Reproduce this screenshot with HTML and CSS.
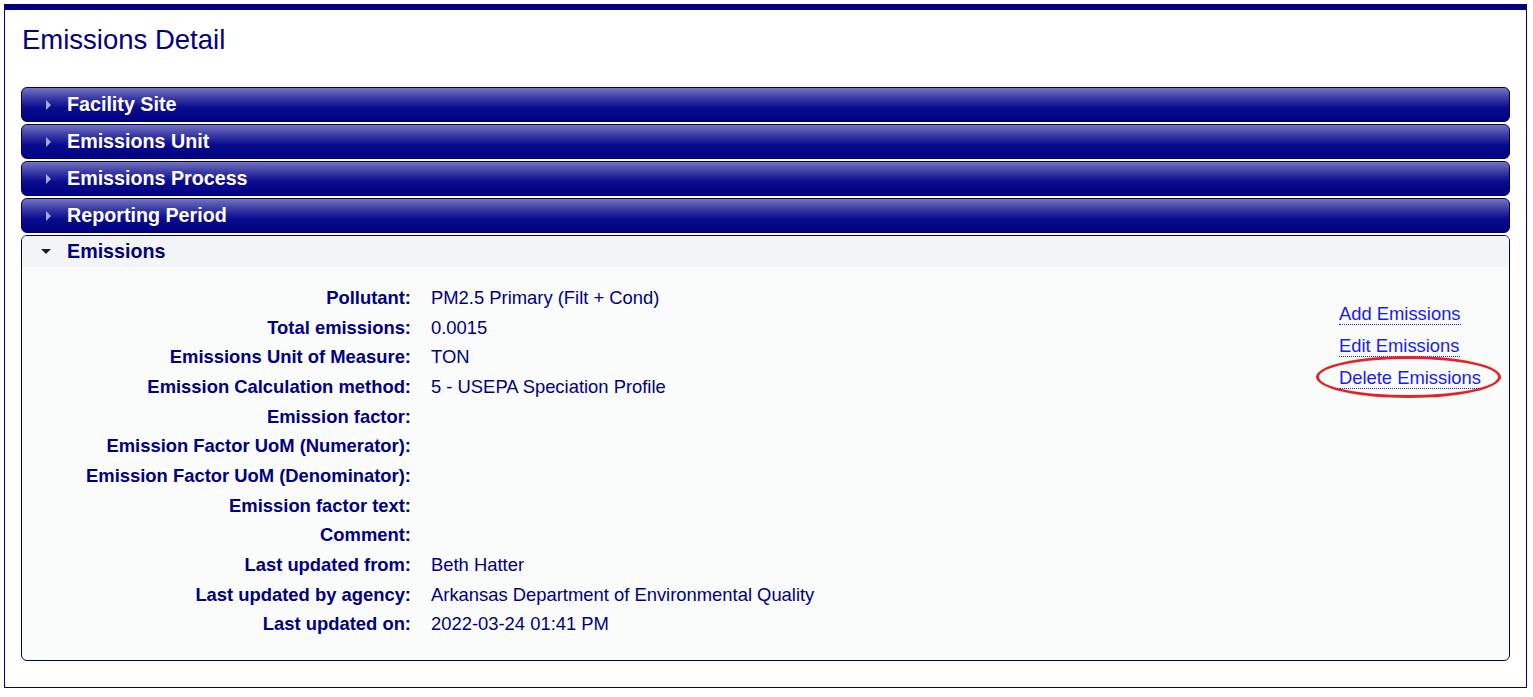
FILE: index.html
```html
<!DOCTYPE html>
<html>
<head>
    <title>Emissions Detail</title>
    <link rel="stylesheet" href="styles.css">
</head>
<body>
    <div class="page">
        <h1 class="page-title">Emissions Detail</h1>

        <div class="accordion">
            <div class="acc-header"><span class="arrow-right"></span>Facility Site</div>
            <div class="acc-header"><span class="arrow-right"></span>Emissions Unit</div>
            <div class="acc-header"><span class="arrow-right"></span>Emissions Process</div>
            <div class="acc-header"><span class="arrow-right"></span>Reporting Period</div>

            <div class="acc-panel">
                <div class="acc-header-open"><span class="arrow-down"></span>Emissions</div>
                <div class="acc-content">
                    <table class="details">
                        <tr><th>Pollutant:</th><td>PM2.5 Primary (Filt + Cond)</td></tr>
                        <tr><th>Total emissions:</th><td>0.0015</td></tr>
                        <tr><th>Emissions Unit of Measure:</th><td>TON</td></tr>
                        <tr><th>Emission Calculation method:</th><td>5 - USEPA Speciation Profile</td></tr>
                        <tr><th>Emission factor:</th><td></td></tr>
                        <tr><th>Emission Factor UoM (Numerator):</th><td></td></tr>
                        <tr><th>Emission Factor UoM (Denominator):</th><td></td></tr>
                        <tr><th>Emission factor text:</th><td></td></tr>
                        <tr><th>Comment:</th><td></td></tr>
                        <tr><th>Last updated from:</th><td>Beth Hatter</td></tr>
                        <tr><th>Last updated by agency:</th><td>Arkansas Department of Environmental Quality</td></tr>
                        <tr><th>Last updated on:</th><td>2022-03-24 01:41 PM</td></tr>
                    </table>

                    <div class="actions">
                        <a href="#" class="action-link">Add Emissions</a>
                        <a href="#" class="action-link">Edit Emissions</a>
                        <a href="#" class="action-link highlighted">Delete Emissions</a>
                    </div>
                </div>
            </div>
        </div>
    </div>
</body>
</html>
```

FILE: styles.css
```css
body {
    font-family: "Liberation Sans", Arial, sans-serif;
    margin: 0;
    padding: 4px;
    background-color: #ffffff;
    color: #000080;
}

.page {
    width: 1489px;
    height: 658px;
    border: 1px solid #000080;
    border-top: 6px solid #000080;
    padding: 0 16px 19px 16px;
}

.page-title {
    font-size: 27.5px;
    line-height: 30px;
    font-weight: normal;
    color: #000080;
    margin: 14.5px 0 32.5px 1px;
}

.accordion {
    display: flex;
    flex-direction: column;
    gap: 2px;
}

.acc-header {
    height: 33px;
    display: flex;
    align-items: center;
    border: 1px solid #00005a;
    border-radius: 6px;
    background: linear-gradient(to bottom, #7474bf 0%, #3b3ba6 30%, #0b0b8e 60%, #000084 100%);
    color: #ffffff;
    font-size: 19.7px;
    font-weight: bold;
}

.arrow-right {
    width: 0;
    height: 0;
    border-top: 5px solid transparent;
    border-bottom: 5px solid transparent;
    border-left: 5px solid #a9a9d6;
    margin: 0 16px 0 24px;
}

.acc-panel {
    border: 1px solid #000060;
    border-radius: 6px;
    background-color: #fafbfb;
    height: 424px;
    overflow: hidden;
}

.acc-header-open {
    height: 31px;
    display: flex;
    align-items: center;
    background-color: #f2f4f6;
    font-size: 19.7px;
    font-weight: bold;
    color: #000080;
}

.arrow-down {
    width: 0;
    height: 0;
    border-left: 5px solid transparent;
    border-right: 5px solid transparent;
    border-top: 5px solid #1a1a40;
    margin: 0 16px 0 19px;
}

.acc-content {
    display: flex;
    justify-content: space-between;
    padding: 16px 28px 0 0;
}

.details {
    border-collapse: collapse;
    font-size: 18.4px;
}

.details th,
.details td {
    height: 29.7px;
    padding: 0 10px;
    color: #000080;
}

.details th {
    width: 389px;
    text-align: right;
    font-weight: bold;
    padding-left: 0;
}

.details td {
    text-align: left;
}

.actions {
    display: flex;
    flex-direction: column;
    align-items: flex-start;
    gap: 10px;
    padding-top: 20px;
}

.action-link {
    font-size: 18.4px;
    color: #1a1aff;
    text-decoration: none;
    border-bottom: 1px dotted #1a1aff;
    line-height: 21px;
}

.highlighted {
    position: relative;
}

.highlighted::after {
    content: "";
    position: absolute;
    left: -23px;
    top: -11.5px;
    width: 179px;
    height: 36px;
    border: 3px solid #e82020;
    border-radius: 50%;
}
```
